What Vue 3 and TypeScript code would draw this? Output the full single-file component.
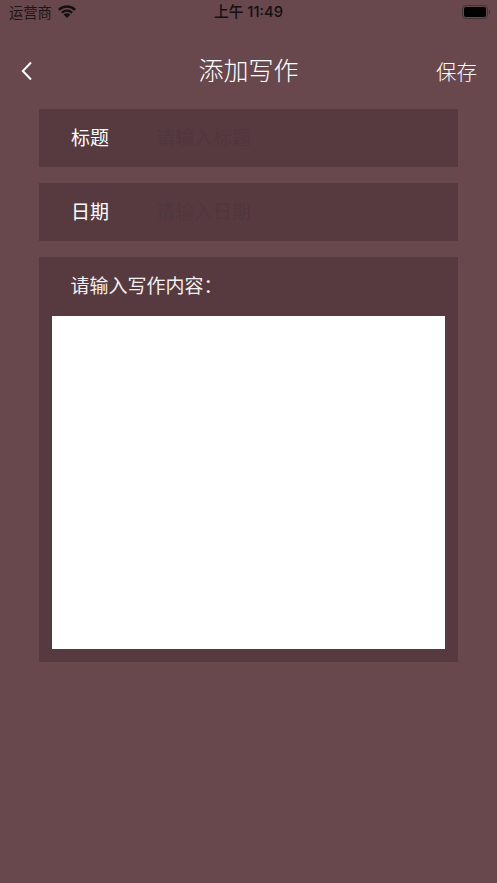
<script setup lang="ts">
const fields = [
  { label: '标题', placeholder: '请输入标题' },
  { label: '日期', placeholder: '请输入日期' },
]
</script>

<template>
  <div class="page">
    <header class="status">
      <div class="status-left">
        <span class="carrier">运营商</span>
        <svg class="wifi" width="18" height="13" viewBox="0 0 18 13">
          <path d="M.9 4.900A11.500 11.500 0 0 1 17.100 4.900" fill="none" stroke="#111" stroke-width="2.400" />
          <path d="M3.800 7.800A7.400 7.400 0 0 1 14.200 7.800" fill="none" stroke="#111" stroke-width="2.300" />
          <path d="M9 13 5.600 9.600A4.800 4.800 0 0 1 12.400 9.600Z" fill="#111" />
        </svg>
      </div>
      <span class="time">上午 11:49</span>
      <div class="status-right">
        <div class="battery"><div class="battery-fill"></div><div class="battery-tip"></div></div>
      </div>
    </header>

    <nav class="nav">
      <svg class="back" width="14" height="20" viewBox="0 0 14 20">
        <path d="M11 1.500 2.800 10 11 18.500" fill="none" stroke="#fff" stroke-width="2" />
      </svg>
      <h1 class="title">添加写作</h1>
      <span class="save">保存</span>
    </nav>

    <main class="content">
      <div v-for="f in fields" :key="f.label" class="row">
        <span class="label">{{ f.label }}</span>
        <span class="placeholder">{{ f.placeholder }}</span>
      </div>
      <section class="editor">
        <div class="editor-label">请输入写作内容：</div>
        <div class="editor-area"></div>
      </section>
    </main>
  </div>
</template>

<style>
html, body { margin: 0; background: #68474d; }
</style>

<style scoped>
.page {
  width: 497px;
  height: 883px;
  background: #68474d;
  overflow: hidden;
  font-family: "Noto Sans CJK SC", "Liberation Sans", sans-serif;
  color: #fff;
}
.status {
  height: 25px;
  display: grid;
  grid-template-columns: 1fr auto 1fr;
  align-items: center;
  padding: 0 9px 0 9px;
  color: #141012;
}
.status-left { display: flex; align-items: center; gap: 6px; }
.status-right { display: flex; justify-content: flex-end; }
.carrier { font-size: 14.300px; line-height: 23px; margin-bottom: 2px; color: #1d1618; }
.wifi { margin-bottom: 2px; }
.time {
  font-size: 14.700px;
  line-height: 25px;
  font-weight: 500;
  font-family: "Inter", "Noto Sans CJK SC", sans-serif;
}
.battery {
  position: relative;
  width: 26px;
  height: 14px;
  box-sizing: border-box;
  border: 1px solid #46323a;
  border-radius: 4px;
  padding: 1px;
  margin-bottom: 1px;
}
.battery-fill { width: 100%; height: 100%; background: #000; border-radius: 2px; }
.battery-tip {
  position: absolute;
  right: -3px;
  top: 4px;
  width: 1px;
  height: 4px;
  background: #46323a;
}
.nav {
  height: 84px;
  box-sizing: border-box;
  padding: 25px 20px 17px;
  display: flex;
  align-items: center;
  justify-content: space-between;
  position: relative;
}
.title {
  position: absolute;
  left: 0;
  right: 0;
  top: 23px;
  margin: 0;
  text-align: center;
  font-size: 25px;
  font-weight: 300;
  line-height: 42px;
}
.save { font-size: 20.500px; line-height: 42px; font-weight: 300; }
.content {
  margin: 0 39px;
  display: flex;
  flex-direction: column;
  gap: 16px;
}
.row {
  height: 58px;
  background: #573a3f;
  display: flex;
  align-items: center;
  padding-left: 32px;
}
.label { width: 85px; margin-right: -1px; font-size: 19px; line-height: 56px; margin-bottom: 2px; }
.placeholder { font-size: 19px; line-height: 56px; margin-bottom: 2px; margin-left: 1px; color: #4e373d; }
.editor {
  height: 405px;
  box-sizing: border-box;
  background: #573a3f;
  padding: 0 13px 13px;
  display: flex;
  flex-direction: column;
}
.editor-label {
  height: 59px;
  line-height: 56px;
  padding-left: 18.500px;
  font-size: 19px;
  color: #f4f0f1;
}
.editor-area { flex: 1; background: #fff; }
</style>
